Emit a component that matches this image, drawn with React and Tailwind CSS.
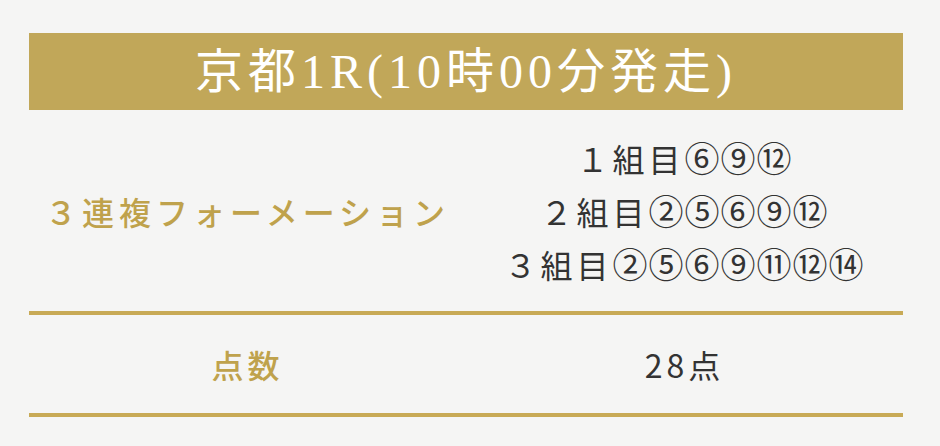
const groups = [
  { label: '１組目', nums: '⑥⑨⑫' },
  { label: '２組目', nums: '②⑤⑥⑨⑫' },
  { label: '３組目', nums: '②⑤⑥⑨⑪⑫⑭' },
];

const App = () => {
  return (
    <div className="min-h-screen w-[940px] bg-[#f5f5f4] pt-[33px] font-['Noto_Sans_CJK_JP',sans-serif]">
      <div className="ml-[29px] w-[874px]">
        <div className="flex h-[77px] items-center justify-center bg-[#c1a759] font-['Liberation_Serif','Noto_Sans_CJK_JP',serif] text-[48px] leading-none tracking-[5px] text-white">
          京都1R(10時00分発走)
        </div>

        <div className="grid h-[205px] grid-cols-2 border-b-4 border-[#c8aa56]">
          <div className="flex items-center justify-center text-[32px] font-medium tracking-[5px] text-[#bfa24c]">
            ３連複フォーメーション
          </div>
          <div className="flex flex-col items-center justify-center text-[32px] leading-[52px] tracking-[4px] text-[#333333]">
            {groups.map((g) => (
              <div key={g.label}>
                {g.label}
                <span className="text-[35px] tracking-[1px]">{g.nums}</span>
              </div>
            ))}
          </div>
        </div>

        <div className="grid h-[102px] grid-cols-2 border-b-4 border-[#c8aa56]">
          <div className="flex items-center justify-center text-[32px] font-medium tracking-[4px] text-[#bfa24c]">
            点数
          </div>
          <div className="flex items-center justify-center text-[32px] tracking-[4px] text-[#333333]">
            28点
          </div>
        </div>
      </div>
    </div>
  );
};

export default App;
